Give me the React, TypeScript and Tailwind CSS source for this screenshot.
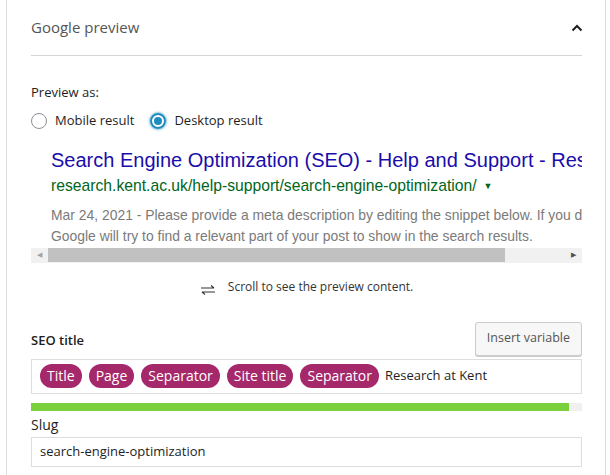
import React from "react";

const ui = { fontFamily: '"Open Sans", "Noto Sans", sans-serif' };
const arial = { fontFamily: '"Liberation Sans", Arial, sans-serif' };

const pills = ["Title", "Page", "Separator", "Site title", "Separator"];

const Radio = ({ checked, label }: { checked?: boolean; label: string }) => (
  <label className="flex items-center gap-[8px]">
    {checked ? (
      <span className="flex h-[16px] w-[16px] items-center justify-center rounded-full border-2 border-[#1e8cbe] shadow-[0_0_2px_1px_rgba(30,140,190,0.5)]">
        <span className="h-[8px] w-[8px] rounded-full bg-[#1e8cbe]" />
      </span>
    ) : (
      <span className="h-[16px] w-[16px] rounded-full border border-[#8c8f94] bg-white" />
    )}
    <span className="text-[13px] text-[#1e1e1e]">{label}</span>
  </label>
);

const GooglePreview = () => (
  <div className="mt-[16px] overflow-hidden">
    <div className="pl-[20px] whitespace-nowrap" style={arial}>
      <div className="text-[20px] leading-[26px] text-[#1a0dab]">
        Search Engine Optimization (SEO) - Help and Support - Research at Kent
      </div>
      <div className="flex items-center text-[15.7px] leading-[26px] text-[#006621]">
        research.kent.ac.uk/help-support/search-engine-optimization/
        <span className="ml-[7px] text-[9px]">▼</span>
      </div>
      <div className="mt-[6px] text-[13.9px] leading-[21px] text-[#7a7a7a]">
        <div>
          Mar 24, 2021 - Please provide a meta description by editing the snippet below. If you don't, Google
        </div>
        <div>Google will try to find a relevant part of your post to show in the search results.</div>
      </div>
    </div>
    <div className="mt-[1px] flex h-[15px] items-center bg-[#f1f1f1]">
      <span className="flex w-[17px] justify-center text-[7px] text-[#a3a3a3]">◀</span>
      <div className="h-[14px] w-[457px] bg-[#c1c1c1]" />
      <div className="flex-1" />
      <span className="flex w-[17px] justify-center text-[7px] text-[#505050]">▶</span>
    </div>
  </div>
);

export default function App() {
  return (
    <div className="h-[475px] w-[610px] overflow-hidden bg-white" style={ui}>
      <div className="ml-[6px] h-full w-[600px] border-x border-[#dcdcde] pl-[24px] pr-[23px]">
        <div className="flex h-[56px] items-center justify-between border-b border-[#d4d4d4]">
          <span className="text-[15px] text-[#555]">Google preview</span>
          <svg width="12" height="8" viewBox="0 0 12 8" className="mr-[-1px]">
            <path d="M1.5 6.5 6 2l4.5 4.5" fill="none" stroke="#1e1e1e" strokeWidth="2" />
          </svg>
        </div>

        <div className="mt-[26px] text-[13px] leading-[20px] text-[#1e1e1e]">Preview as:</div>
        <div className="mt-[9px] flex items-center gap-[16px]">
          <Radio label="Mobile result" />
          <Radio checked label="Desktop result" />
        </div>

        <GooglePreview />

        <div className="mt-[13px] flex items-center justify-center gap-[12px] text-[12px] text-[#333]">
          <svg width="16" height="16" viewBox="0 0 16 16" className="mt-[6px]">
            <path d="M1 6h13M11 3.5 14 6M15 10H2M5 12.5 2 10" fill="none" stroke="#333" strokeWidth="1.1" />
          </svg>
          <span>Scroll to see the preview content.</span>
        </div>

        <div className="mt-[24px] flex items-end justify-between">
          <span className="mb-[5px] text-[13px] font-semibold text-[#1e1e1e]">SEO title</span>
          <button className="h-[34px] rounded-[3px] border border-[#ccc] bg-[#f7f7f7] px-[11px] text-[12.5px] text-[#555] shadow-[0_1px_0_#ccc]">
            Insert variable
          </button>
        </div>
        <div className="mt-[3px] flex h-[35px] items-center gap-[7px] border border-[#ddd] px-[8px]">
          {pills.map((p, i) => (
            <span
              key={i}
              className="rounded-[12px] bg-[#a4286a] px-[7px] text-[14px] leading-[24px] text-white"
            >
              {p}
            </span>
          ))}
          <span className="ml-[-1px] text-[13px] text-[#1e1e1e]">Research at Kent</span>
        </div>
        <div className="mt-[9px] h-[8px] bg-[#f0f0f0]">
          <div className="h-full w-[538px] bg-[#7ad03a]" />
        </div>
        <div className="mt-[4px] text-[14px] leading-[20px] text-[#1e1e1e]">Slug</div>
        <div className="mt-[2px] flex h-[30px] items-center border border-[#ddd] px-[8px] text-[13px] text-[#1e1e1e]">
          search-engine-optimization
        </div>
      </div>
    </div>
  );
}
